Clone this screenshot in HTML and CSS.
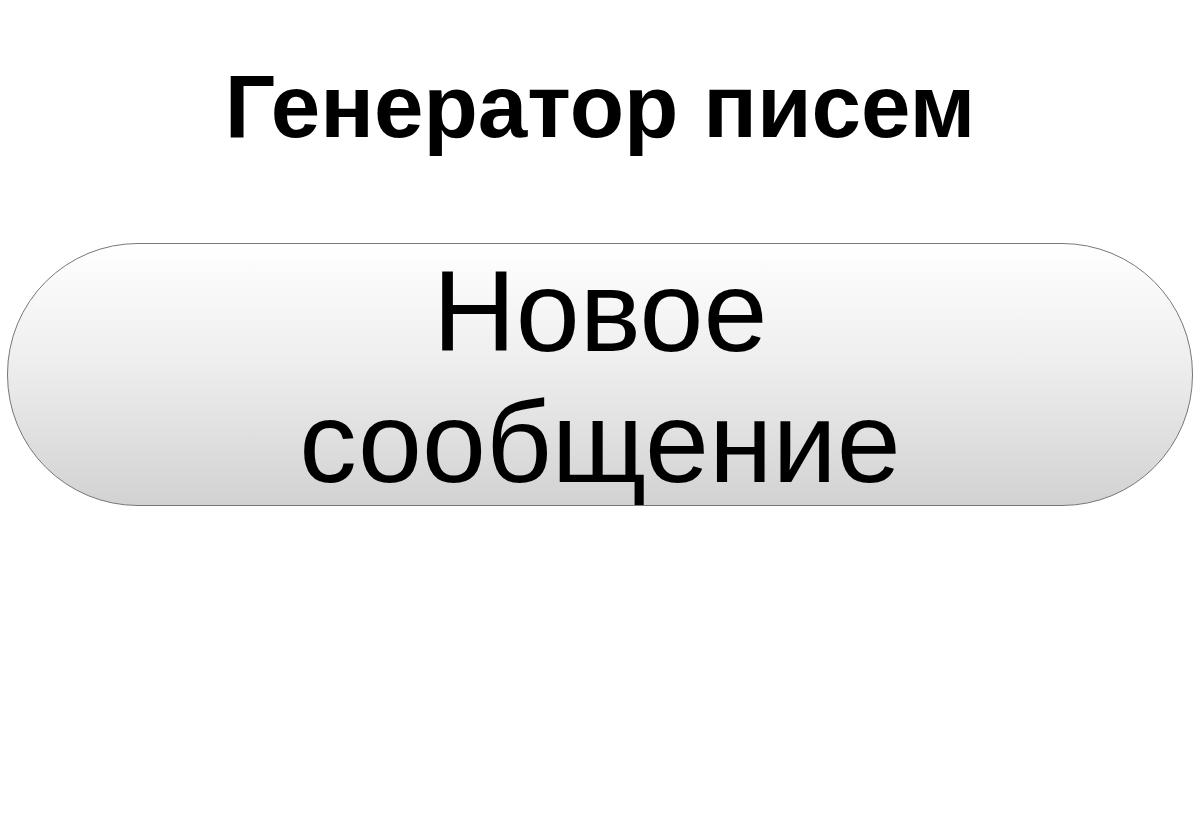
FILE: index.html
```html
<!DOCTYPE html>
<html lang="ru">
<head>
<meta charset="utf-8">
<link rel="stylesheet" href="styles.css">
</head>
<body>
<main class="page">
  <h1 class="title">Генератор писем</h1>
  <div class="new-btn" role="button" tabindex="0"><span class="new-btn-label">Новое сообщение</span></div>
</main>
</body>
</html>
```
FILE: styles.css
```css
html, body {
  margin: 0;
  padding: 0;
  background: #ffffff;
}
.page {
  width: 1200px;
  height: 832px;
  display: flex;
  flex-direction: column;
  align-items: stretch;
  font-family: "Liberation Sans", Arial, sans-serif;
}
.title {
  margin: 0 0 87px;
  padding-top: 56px;
  height: 156px;
  box-sizing: border-box;
  text-align: center;
  font-size: 89px;
  font-weight: bold;
  line-height: 100px;
  color: #000;
}
.new-btn {
  margin: 0 7px;
  height: 263px;
  box-sizing: border-box;
  border: 1px solid #777;
  border-radius: 131px;
  background: linear-gradient(to bottom, #ffffff 0%, #eeeeee 45%, #d2d2d2 100%);
  padding: 2px 270px 0;
  text-align: center;
  cursor: pointer;
}
.new-btn-label {
  display: block;
  font-family: "Liberation Sans", Arial, sans-serif;
  font-size: 115px;
  line-height: 131px;
  color: #000;
}
```
